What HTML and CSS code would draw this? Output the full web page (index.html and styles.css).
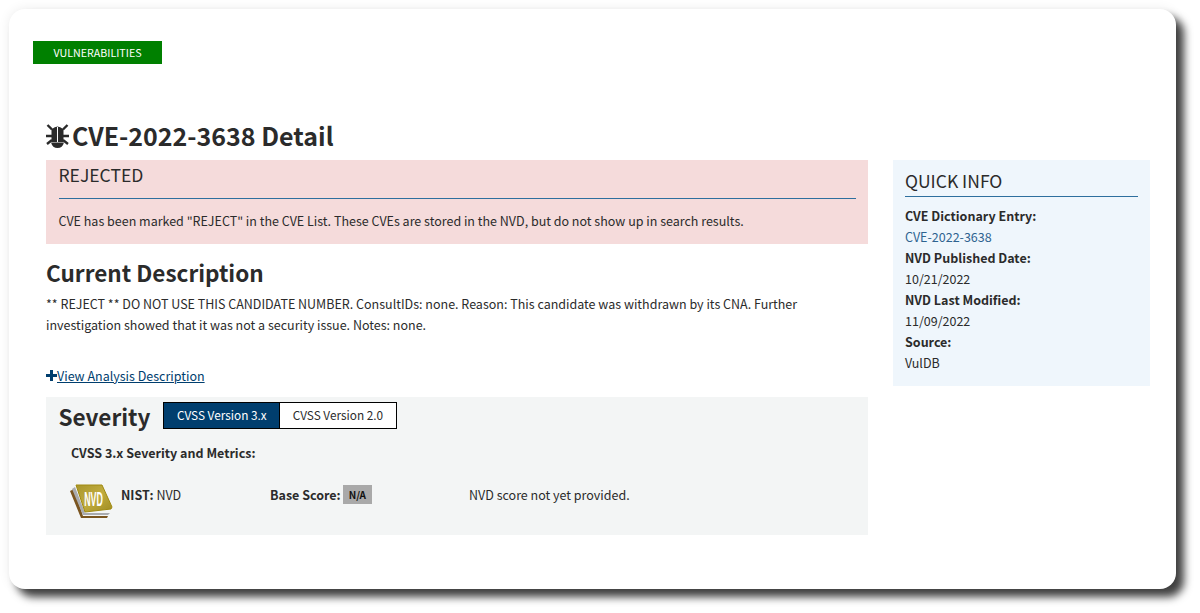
FILE: index.html
```html
<!DOCTYPE html>
<html lang="en">
<head>
<meta charset="utf-8">
<title>CVE-2022-3638 Detail</title>
<link rel="stylesheet" href="styles.css">
</head>
<body>
<div class="card">
  <div class="badge">VULNERABILITIES</div>
  <div class="content">
    <h2 class="title">
      <svg class="bug" viewBox="0 0 26 25" width="26" height="25" aria-hidden="true">
        <path d="M5.500 5h12v13h-12z" fill="#2a2a2a"/>
        <path d="M6 5Q11.500 0 17 5v2H6z" fill="#2a2a2a"/>
        <path d="M11 3h1v15h-1z" fill="#fff"/>
        <path d="M5 18.500h13q-1.500 5.500-6.500 5.500T5 18.500z" fill="#2a2a2a"/>
        <path d="M1.500 1l4.500 4.500M21.500 1L17 5.500M0 12h6M23 12h-6M1 20l5-4M22 20l-5-4" stroke="#2a2a2a" stroke-width="2.400" fill="none"/>
      </svg>CVE-2022-3638 Detail
    </h2>
    <div class="columns">
      <main class="main">
        <section class="alert">
          <h3 class="alert-title">REJECTED</h3>
          <p class="alert-text">CVE has been marked "REJECT" in the CVE List. These CVEs are stored in the NVD, but do not show up in search results.</p>
        </section>
        <h3 class="section-title">Current Description</h3>
        <p class="description">** REJECT ** DO NOT USE THIS CANDIDATE NUMBER. ConsultIDs: none. Reason: This candidate was withdrawn by its CNA. Further investigation showed that it was not a security issue. Notes: none.</p>
        <div class="analysis">
          <svg class="plus" viewBox="0 0 11 11" width="11" height="11" aria-hidden="true"><path d="M4 0h3v4h4v3H7v4H4V7H0V4h4z" fill="#003e6e"/></svg><a class="analysis-link" href="#">View Analysis Description</a>
        </div>
        <section class="severity">
          <div class="severity-head">
            <h3 class="severity-title">Severity</h3>
            <div class="tabs">
              <span class="tab tab-active">CVSS Version 3.x</span>
              <span class="tab">CVSS Version 2.0</span>
            </div>
          </div>
          <p class="metrics-title">CVSS 3.x Severity and Metrics:</p>
          <div class="metrics">
            <div class="cell cell-nist">
              <svg class="nvd-logo" viewBox="0 0 43 35" width="43" height="35" aria-hidden="true">
                <defs>
                  <linearGradient id="nvd-gold" x1="0" y1="0" x2="1" y2="1">
                    <stop offset="0" stop-color="#a8952c"/>
                    <stop offset=".5" stop-color="#c0ac3e"/>
                    <stop offset="1" stop-color="#a08c22"/>
                  </linearGradient>
                </defs>
                <path d="M0 7l11 27h26l1-2H13L4 5z" fill="#7a5520"/>
                <path d="M2 5l11 26h25l2-2H15L5 3z" fill="#a9abae"/>
                <path d="M6 1h26l10 22-1 2-26 3z" fill="url(#nvd-gold)" stroke="#a08a10" stroke-width="1"/>
                <text class="nvd-logo-text" transform="translate(23.500 22) scale(.42 1)" text-anchor="middle">NVD</text>
              </svg>
              <span><strong>NIST:</strong> NVD</span>
            </div>
            <div class="cell cell-score">
              <strong>Base Score:</strong>
              <span class="score">N/A</span>
            </div>
            <div class="cell cell-note">NVD score not yet provided.</div>
          </div>
        </section>
      </main>
      <aside class="side">
        <h4 class="side-title">QUICK INFO</h4>
        <dl class="info">
          <dt>CVE Dictionary Entry:</dt>
          <dd><a class="info-link" href="#">CVE-2022-3638</a></dd>
          <dt>NVD Published Date:</dt>
          <dd>10/21/2022</dd>
          <dt>NVD Last Modified:</dt>
          <dd>11/09/2022</dd>
          <dt>Source:</dt>
          <dd>VulDB</dd>
        </dl>
      </aside>
    </div>
  </div>
</div>
</body>
</html>
```
FILE: styles.css
```css
* { box-sizing: border-box; }
html, body { margin: 0; height: 100%; background: #fff; overflow: hidden; }
body {
  padding: 9px 24px 24px 9px;
  font-family: "Noto Sans CJK SC", "Noto Sans", sans-serif;
  font-size: 12.500px;
  line-height: 21px;
  color: #2b2b2b;
}
.card {
  height: 580px;
  width: 1167px;
  border-radius: 16px;
  background: #fff;
  padding: 32px 26px 0 24px;
  box-shadow: 8px 8px 9px rgba(0,0,0,.75), 0 0 12px rgba(0,0,0,.08);
}
.badge {
  width: 129px;
  height: 23px;
  background: #008000;
  color: #fff;
  font-size: 10.700px;
  line-height: 23px;
  text-align: center;
}
.content { padding: 55px 0 0 13px; }
.title {
  margin: 0;
  display: flex;
  align-items: center;
  height: 32px;
  font-size: 25px;
  line-height: 32px;
  font-weight: 700;
  color: #2b2b2b;
}
.bug { flex: none; margin-top: 3px; }
.columns { display: flex; gap: 25px; margin-top: 9px; align-items: flex-start; }
.main { width: 822px; flex: none; }
.alert { height: 84px; background: #f5dbdb; padding: 3px 12px 0 12.500px; }
.alert-title {
  margin: 0;
  font-size: 17.500px;
  font-weight: 400;
  line-height: 24px;
  height: 36px;
  border-bottom: 1px solid #2e6f9e;
}
.alert-text { margin: 11px 0 0; }
.section-title {
  margin: 13px 0 0;
  font-size: 22.500px;
  line-height: 31px;
  font-weight: 700;
}
.description { margin: 5px 0 0; }
.analysis { margin-top: 30px; height: 21px; display: flex; align-items: center; }
.analysis-link { color: #003e6e; }
.plus { flex: none; }
.severity { margin-top: 11px; height: 138px; background: #f3f5f5; padding: 5px 12.500px; }
.severity-head { display: flex; align-items: flex-start; gap: 13px; height: 28px; }
.severity-title { margin: -1.500px 0 0; font-size: 22.500px; line-height: 31px; font-weight: 700; }
.tabs { display: flex; border: 1px solid #000; height: 27px; background: #fff; }
.tab { padding: 0 12.500px; line-height: 23px; font-size: 11.800px; color: #2b2b2b; }
.tab-active { background: #003e6e; color: #fff; border-right: 1px solid #000; }
.metrics-title { margin: 12px 0 0 12.500px; font-weight: 700; }
.metrics { display: flex; margin: 13px 0 0 12.500px; align-items: center; height: 36px; }
.cell { display: flex; align-items: center; }
.cell-nist { width: 199px; gap: 8px; margin-left: -1px; }
.cell-score { width: 199px; gap: 2px; margin-left: 1px; }
.nvd-logo { flex: none; margin-top: 14px; }
.nvd-logo-text { font: 700 21px "Liberation Sans", sans-serif; fill: #fff; }
.score { background: #a9a9a9; padding: 0 6px; font-size: 10px; line-height: 19px; font-weight: 700; color: #111; }
.side { width: 257px; height: 226px; background: #eff6fc; padding: 8px 12px; }
.side-title {
  margin: 0;
  font-size: 17.500px;
  font-weight: 400;
  line-height: 26px;
  height: 29px;
  border-bottom: 1px solid #2e6f9e;
}
.info { margin: 8px 0 0; }
.info dt { font-weight: 700; }
.info dd { margin: 0; }
.info-link { color: #2e6390; text-decoration: none; }
```
